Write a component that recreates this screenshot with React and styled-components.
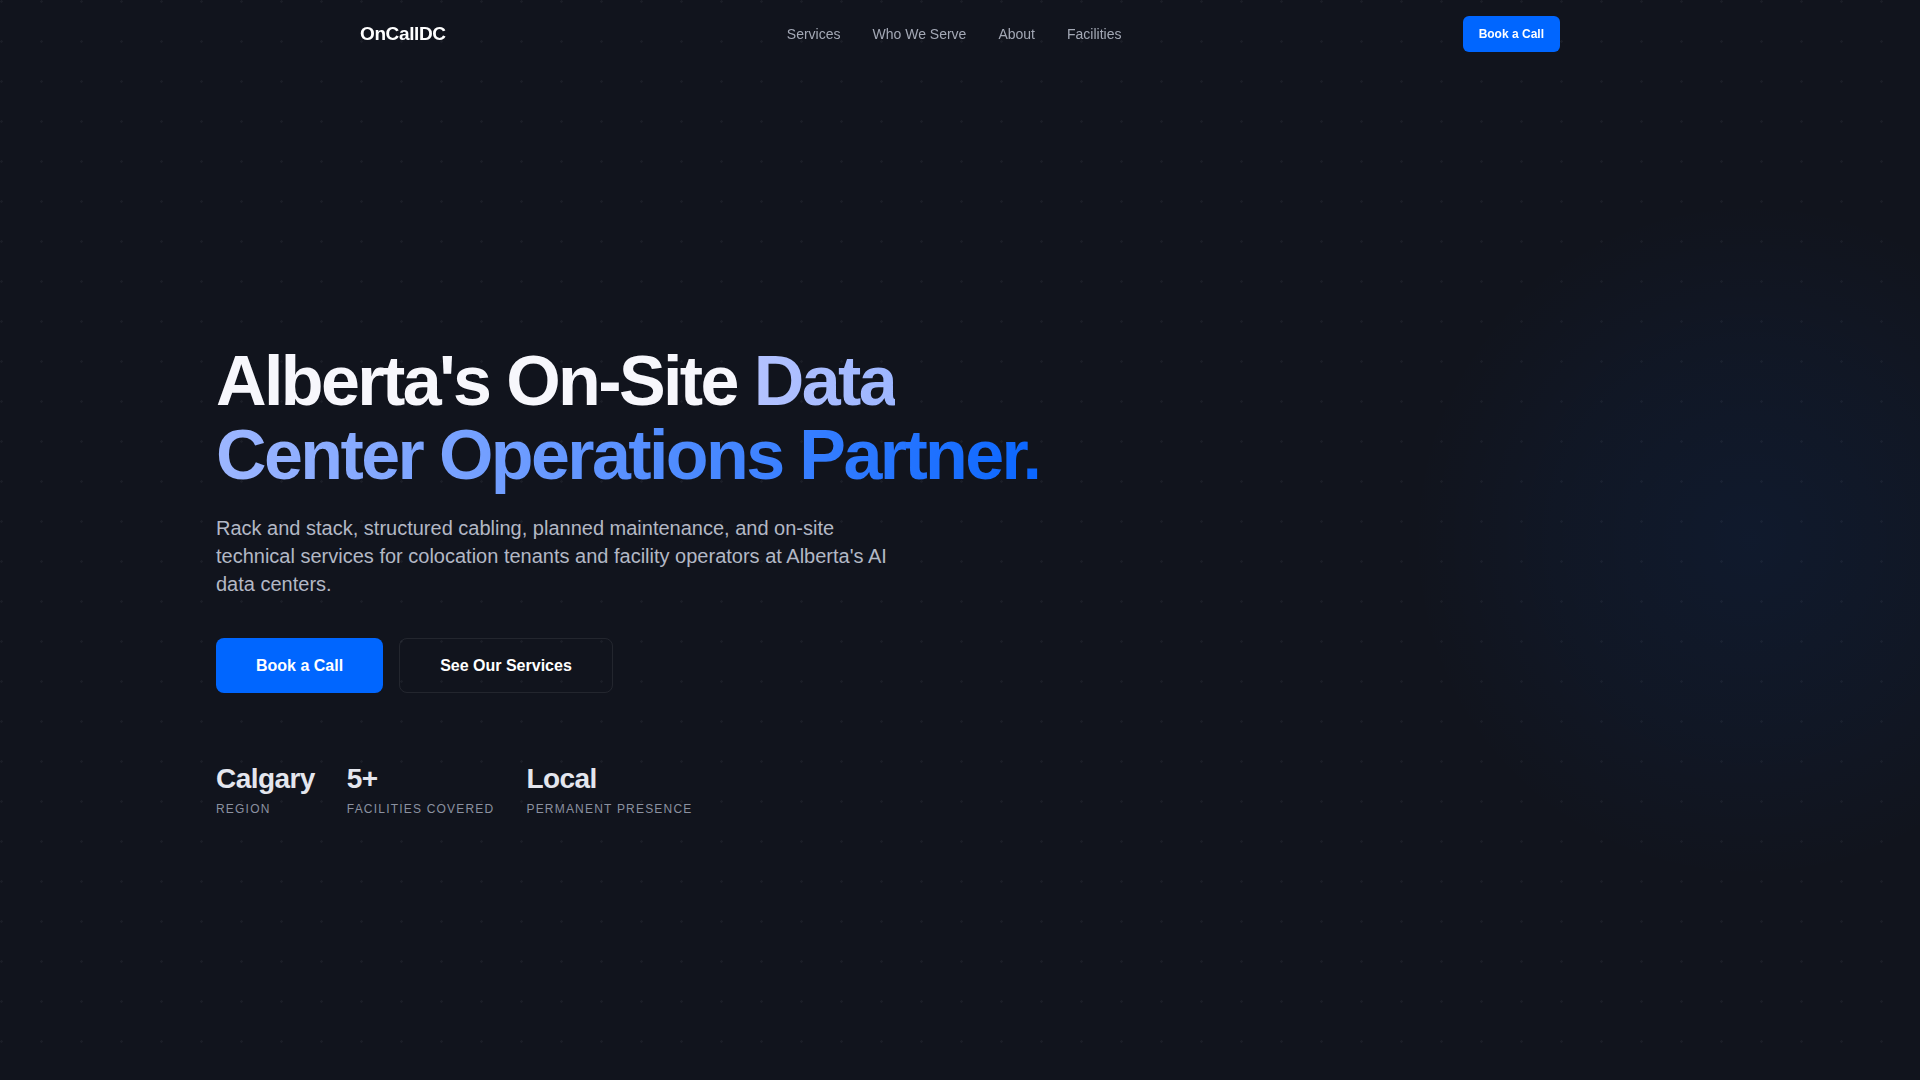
import React from 'react'
import styled, { createGlobalStyle } from 'styled-components'

const GlobalStyle = createGlobalStyle`
  * { box-sizing: border-box; }
  html, body {
    margin: 0;
    padding: 0;
    background: #11141d;
    font-family: "Liberation Sans", Arial, sans-serif;
    color: #f5f6fa;
  }
`

const Page = styled.div`
  position: relative;
  min-height: 100vh;
  background-color: #11141d;
  background-image:
    radial-gradient(circle at 1750px 540px, rgba(0, 102, 255, 0.07) 0, rgba(0, 102, 255, 0.035) 200px, rgba(0, 102, 255, 0) 340px),
    radial-gradient(circle at 1.5px 1.5px, rgba(255, 255, 255, 0.045) 1px, transparent 1.5px);
  background-size: 100% 100%, 40px 40px;
  background-repeat: no-repeat, repeat;
`

const Header = styled.header`
  position: fixed;
  top: 0;
  left: 0;
  right: 0;
  z-index: 10;
`

const Nav = styled.nav`
  max-width: 1200px;
  margin: 0 auto;
  padding: 16px 0;
  display: flex;
  align-items: center;
  justify-content: space-between;
`

const Logo = styled.a`
  font-size: 19px;
  font-weight: 700;
  letter-spacing: -0.02em;
  color: #ffffff;
  text-decoration: none;
`

const Links = styled.ul`
  list-style: none;
  margin: 0;
  padding: 0;
  display: flex;
  gap: 32px;
  a {
    font-size: 14px;
    color: #a3a8b5;
    text-decoration: none;
  }
`

const Button = styled.a`
  display: inline-block;
  font-weight: 700;
  text-decoration: none;
  color: #ffffff;
  background: ${p => (p.$ghost ? 'transparent' : '#0066ff')};
  border: ${p => (p.$ghost ? '1px solid rgba(255, 255, 255, 0.08)' : 'none')};
  font-size: ${p => (p.$small ? '12px' : '16px')};
  line-height: ${p => (p.$small ? '16px' : '17px')};
  padding: ${p => (p.$small ? '10px 16px' : p.$ghost ? '18px 40px' : '19px 40px')};
  border-radius: ${p => (p.$small ? '6px' : '8px')};
`

const Hero = styled.section`
  min-height: 100vh;
  padding-top: 82px;
  display: flex;
  align-items: center;
`

const HeroInner = styled.div`
  width: 100%;
  max-width: 1488px;
  margin: 0 auto;
`

const Title = styled.h1`
  margin: 0 0 22px;
  max-width: 880px;
  font-size: 70px;
  line-height: 1.05;
  font-weight: 700;
  letter-spacing: -2.6px;
  color: #f7f7fc;
  span {
    background: linear-gradient(90deg, #b3c2ff 0%, #6f9dff 45%, #0a66ff 100%);
    -webkit-background-clip: text;
    background-clip: text;
    color: transparent;
  }
`

const Lead = styled.p`
  margin: 0 0 40px;
  max-width: 680px;
  font-size: 20px;
  line-height: 28px;
  color: #b3b8c5;
`

const Actions = styled.div`
  display: flex;
  gap: 16px;
`

const Stats = styled.div`
  margin-top: 69px;
  display: flex;
  gap: 32px;
`

const Stat = styled.div`
  display: flex;
  flex-direction: column;
  gap: 7px;
`

const StatValue = styled.div`
  font-size: 28px;
  line-height: 1.2;
  font-weight: 700;
  letter-spacing: -0.02em;
  color: #e4e6ee;
`

const StatLabel = styled.div`
  font-size: 12px;
  line-height: 1.15;
  letter-spacing: 0.1em;
  text-transform: uppercase;
  color: #8b91a0;
`

const stats = [
  { value: 'Calgary', label: 'Region' },
  { value: '5+', label: 'Facilities Covered' },
  { value: 'Local', label: 'Permanent Presence' },
]

const App = () => {
  return (
    <Page>
      <GlobalStyle />
      <Header>
        <Nav>
          <Logo href="#">OnCallDC</Logo>
          <Links>
            <li><a href="#services">Services</a></li>
            <li><a href="#who">Who We Serve</a></li>
            <li><a href="#about">About</a></li>
            <li><a href="#facilities">Facilities</a></li>
          </Links>
          <Button $small href="#book">Book a Call</Button>
        </Nav>
      </Header>
      <Hero>
        <HeroInner>
          <Title>
            Alberta's On-Site <span>Data Center Operations Partner.</span>
          </Title>
          <Lead>
            Rack and stack, structured cabling, planned maintenance, and on-site
            technical services for colocation tenants and facility operators at
            Alberta's AI data centers.
          </Lead>
          <Actions>
            <Button href="#book">Book a Call</Button>
            <Button $ghost href="#services">See Our Services</Button>
          </Actions>
          <Stats>
            {stats.map(({ value, label }) => (
              <Stat key={label}>
                <StatValue>{value}</StatValue>
                <StatLabel>{label}</StatLabel>
              </Stat>
            ))}
          </Stats>
        </HeroInner>
      </Hero>
    </Page>
  )
}

export default App
